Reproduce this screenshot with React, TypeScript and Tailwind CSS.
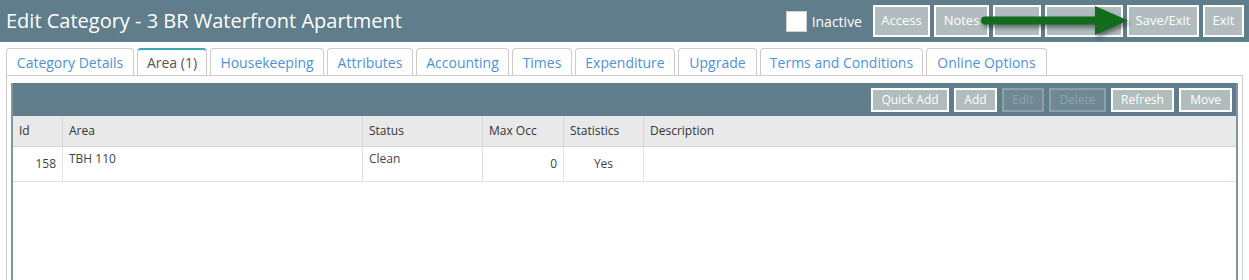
import React from "react";

const tabs = [
  { label: "Category Details", w: "w-[128px]" },
  { label: "Area (1)", w: "w-[70px]", active: true },
  { label: "Housekeeping", w: "w-[114px]" },
  { label: "Attributes", w: "w-[86px]" },
  { label: "Accounting", w: "w-[93px]" },
  { label: "Times", w: "w-[60px]" },
  { label: "Expenditure", w: "w-[100px]" },
  { label: "Upgrade", w: "w-[79px]" },
  { label: "Terms and Conditions", w: "w-[163px]" },
  { label: "Online Options", w: "w-[121px]" },
];

const headerButtons = [
  { label: "Access", w: "w-[57px]" },
  { label: "Notes", w: "w-[55px]" },
  { label: "", w: "w-[48px]" },
  { label: "", w: "w-[78px]" },
  { label: "Save/Exit", w: "w-[72px]" },
  { label: "Exit", w: "w-[41px]" },
];

const toolButtons = [
  { label: "Quick Add", w: "w-[78px]" },
  { label: "Add", w: "w-[43px]" },
  { label: "Edit", w: "w-[42px]", disabled: true },
  { label: "Delete", w: "w-[57px]", disabled: true },
  { label: "Refresh", w: "w-[63px]" },
  { label: "Move", w: "w-[53px]" },
];

const columns = [
  { label: "Id", w: "w-[50px]" },
  { label: "Area", w: "w-[300px]" },
  { label: "Status", w: "w-[120px]" },
  { label: "Max Occ", w: "w-[81px]" },
  { label: "Statistics", w: "w-[80px]" },
  { label: "Description", w: "flex-1" },
];

const EditCategory = () => {
  return (
    <div className="w-[1249px] h-[280px] overflow-hidden bg-white font-['Open_Sans',sans-serif]">
      {/* Header bar */}
      <div className="relative h-[42px] bg-[#607d8b] flex items-center pl-[6px] pr-[5px]">
        <h1 className="text-[20px] text-white leading-none">Edit Category - 3 BR Waterfront Apartment</h1>
        <div className="ml-auto flex items-center">
          <span className="w-[21px] h-[21px] bg-white border border-[#d0d0d0] mr-[5px]" />
          <span className="text-[14px] text-white mr-[11px]">Inactive</span>
          <div className="flex gap-[4px]">
            {headerButtons.map((b, i) => (
              <button
                key={i}
                className={`${b.w} h-[32px] border-2 border-white bg-[#b0bcbd] text-[13px] text-white`}
              >
                {b.label}
              </button>
            ))}
          </div>
        </div>

        {/* Green arrow annotation */}
        <svg
          className="absolute left-[975px] top-0 drop-shadow-[2px_3px_2px_rgba(0,0,0,0.45)]"
          width="160"
          height="42"
          viewBox="0 0 160 42"
        >
          <line x1="10" y1="20.5" x2="124" y2="20.5" stroke="#136c1e" strokeWidth="8" strokeLinecap="round" />
          <polygon points="120,6 153,20.5 120,35" fill="#136c1e" />
        </svg>
      </div>

      {/* Tabs */}
      <div className="flex gap-[3px] px-[6px] pt-[6px]">
        {tabs.map((t) => (
          <div
            key={t.label}
            className={`${t.w} h-[27px] flex items-center justify-center rounded-t-[4px] border border-b-0 text-[14px] ${
              t.active
                ? "border-[#ccc] border-t-2 border-t-[#3ba7b4] text-[#555]"
                : "border-[#ccc] text-[#4f92d2]"
            }`}
          >
            {t.label}
          </div>
        ))}
      </div>

      {/* Tab content */}
      <div className="mx-[6px] h-[230px] border border-[#ccc] pt-[7px] px-[4px]">
        <div className="h-full border-x-2 border-[#7f959f]">
          {/* Toolbar */}
          <div className="h-[33px] bg-[#607d8b] flex items-center justify-end gap-[5px] pr-[4px]">
            {toolButtons.map((b) => (
              <button
                key={b.label}
                className={`${b.w} h-[24px] border-2 text-[12px] ${
                  b.disabled
                    ? "border-[#8ba0a9] bg-[#6f8894] text-[#8ea3ab]"
                    : "border-white bg-[#b0bcbd] text-white"
                }`}
              >
                {b.label}
              </button>
            ))}
          </div>

          {/* Table header */}
          <div className="flex h-[31px] bg-[#e9e9e9] border-b border-[#d6d6d6] text-[12px] text-[#333]">
            {columns.map((c) => (
              <div key={c.label} className={`${c.w} flex items-center px-[6px] border-r border-[#d6d6d6] last:border-r-0`}>
                {c.label}
              </div>
            ))}
          </div>

          {/* Row */}
          <div className="flex h-[35px] border-b border-[#e2e2e2] text-[12px] text-[#444]">
            <div className="w-[50px] px-[6px] pt-[8px] text-right border-r border-[#e2e2e2]">158</div>
            <div className="w-[300px] px-[6px] pt-[3px] border-r border-[#e2e2e2]">TBH 110</div>
            <div className="w-[120px] px-[6px] pt-[3px] border-r border-[#e2e2e2]">Clean</div>
            <div className="w-[81px] px-[6px] pt-[8px] text-right border-r border-[#e2e2e2]">0</div>
            <div className="w-[80px] px-[6px] pt-[8px] text-center border-r border-[#e2e2e2]">Yes</div>
            <div className="flex-1" />
          </div>
        </div>
      </div>
    </div>
  );
};

export default EditCategory;
